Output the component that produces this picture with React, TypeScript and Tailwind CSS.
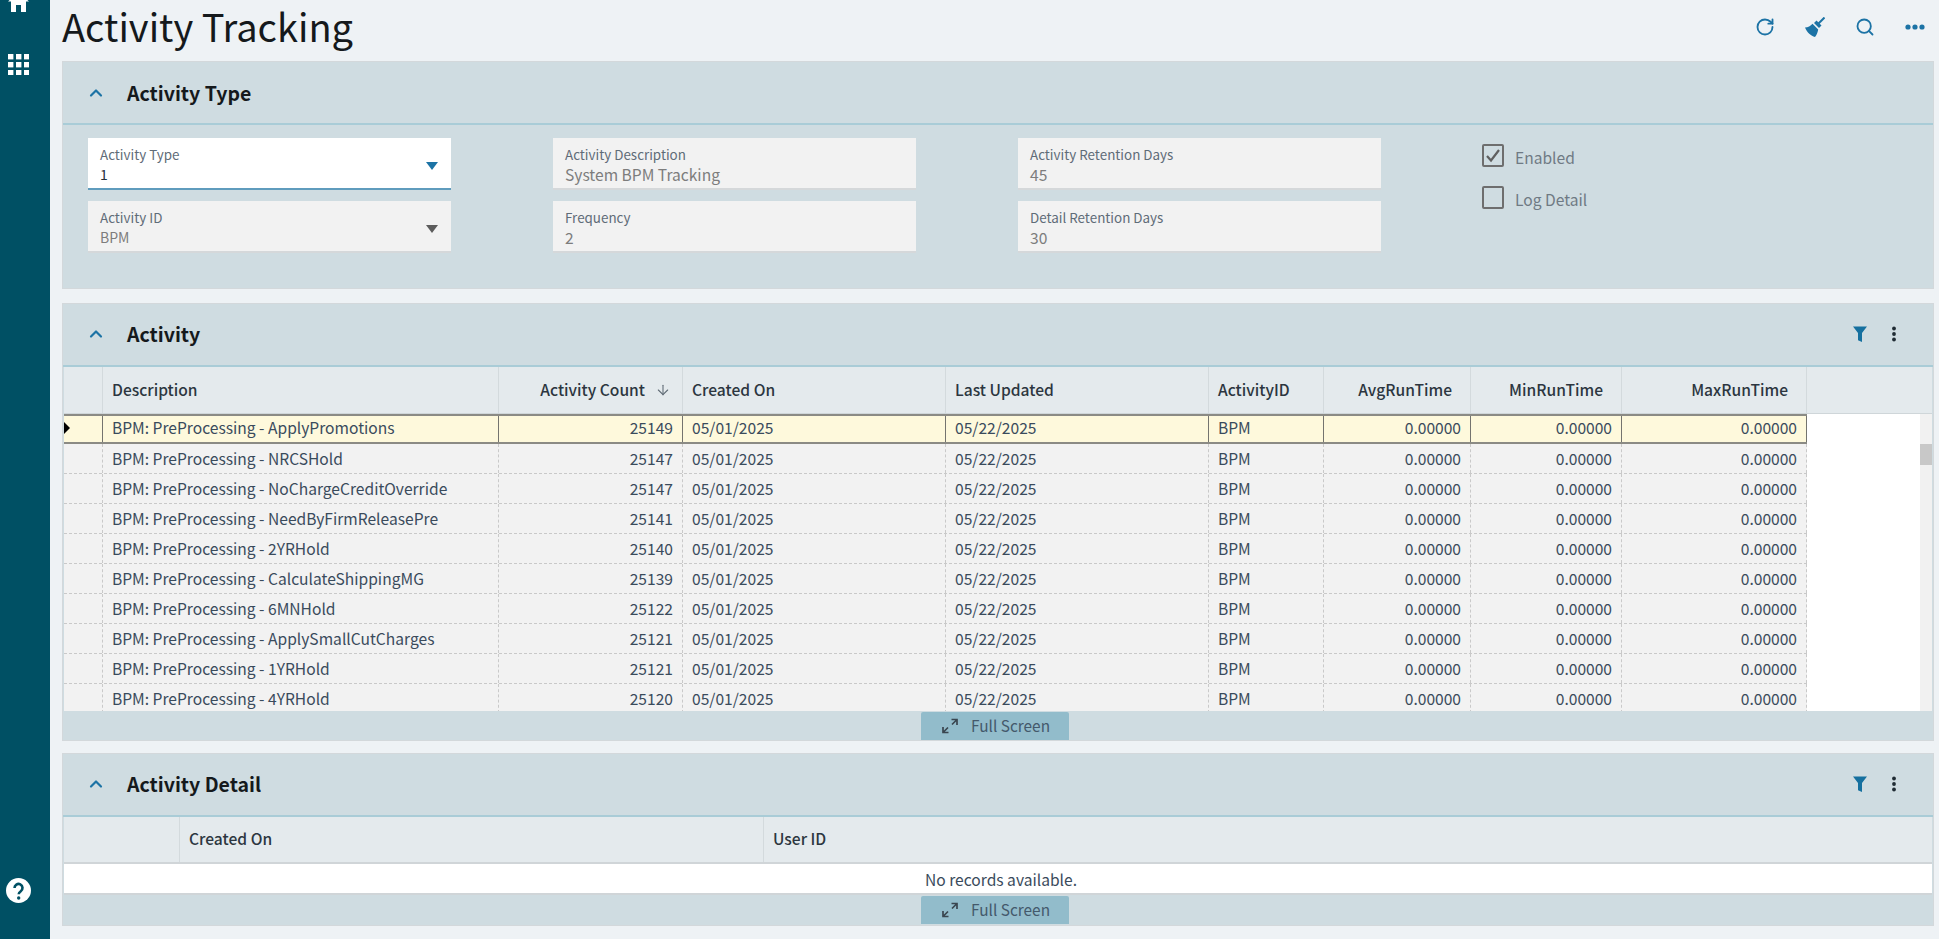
import React from "react";
import { RotateCw, Search, ChevronUp, ArrowDown } from "lucide-react";

const rows: [string, string][] = [
  ["ApplyPromotions", "25149"],
  ["NRCSHold", "25147"],
  ["NoChargeCreditOverride", "25147"],
  ["NeedByFirmReleasePre", "25141"],
  ["2YRHold", "25140"],
  ["CalculateShippingMG", "25139"],
  ["6MNHold", "25122"],
  ["ApplySmallCutCharges", "25121"],
  ["1YRHold", "25121"],
  ["4YRHold", "25120"],
];

function Filter() {
  return (
    <svg width="14" height="16" viewBox="0 0 14 16" className="text-[#16709f]">
      <path d="M0 0.500h14L9 7v9l-4-1.800V7z" fill="currentColor" />
    </svg>
  );
}

function VDots() {
  return (
    <svg width="6" height="18" viewBox="0 0 6 18" className="text-[#1f2b33]">
      <circle cx="3" cy="3.5" r="1.9" fill="currentColor" />
      <circle cx="3" cy="9" r="1.9" fill="currentColor" />
      <circle cx="3" cy="14.5" r="1.9" fill="currentColor" />
    </svg>
  );
}

function PanelHeader({ title, tools }: { title: string; tools?: boolean }) {
  return (
    <div className={`flex h-[63px] shrink-0 items-center border-b-2 border-[#a9ccd7] pl-[25px] pr-[36px] ${tools ? "pb-[2px]" : ""}`}>
      <ChevronUp size={20} strokeWidth={2.6} className="-ml-[2px] text-[#1c73a5]" />
      <div className="ml-[21px] text-[19.5px] font-semibold leading-[26px] text-[#15191c]">{title}</div>
      {tools && (
        <div className="ml-auto flex items-center gap-[24px]">
          <Filter />
          <VDots />
        </div>
      )}
    </div>
  );
}

function Field({ label, value, active, dropdown, small }: { label: string; value: string; active?: boolean; dropdown?: boolean; small?: boolean }) {
  return (
    <div
      className={`relative h-[52px] border-b-2 px-3 pt-[7px] ${
        active ? "border-[#5f9cbd] bg-white" : "border-[#d5d8da] bg-[#f2f2f2]"
      }`}
    >
      <div className="text-[13.4px] leading-[18px] text-[#5f6c78]">{label}</div>
      <div
        className={`${small || active ? "text-[14px]" : "text-[15.6px]"} mt-px leading-[20px] ${
          active ? "text-[#26303a]" : "text-[#7d7d7d]"
        }`}
      >
        {value}
      </div>
      {dropdown && (
        <svg width="12" height="8" viewBox="0 0 12 8" className={`absolute right-[13px] top-[24px] ${active ? "text-[#1c73a5]" : "text-[#5c5c5c]"}`}>
          <path d="M0 0h12L6 8z" fill="currentColor" />
        </svg>
      )}
    </div>
  );
}

function Check({ label, checked }: { label: string; checked?: boolean }) {
  return (
    <div className="-ml-px flex h-[23px] items-center gap-[11px]">
      <div className="flex h-[23px] w-[22px] items-center justify-center rounded-[2px] border-2 border-[#6e6e6e]">
        {checked && (
          <svg width="16" height="15" viewBox="0 0 16 15" className="text-[#5f5f5f]">
            <path d="M2 8l4 4.5L14 2" fill="none" stroke="currentColor" strokeWidth="2.2" />
          </svg>
        )}
      </div>
      <span className="mt-[3px] text-[15.6px] leading-[20px] text-[#6f7a84]">{label}</span>
    </div>
  );
}

function FullScreen() {
  return (
    <div className="flex h-[29px] shrink-0 items-start justify-center pr-[6px] pt-px">
      <div className="flex h-[28px] w-[148px] items-center rounded-t-[2px] bg-[#92bccb] pl-[21px] text-[15.4px] text-[#44596b]">
        <svg width="16" height="16" viewBox="0 0 16 16" className="text-[#3a4650]">
          <path d="M9.5 1.5H15V7M15 1.5L10 6.5M1 9v5.5h5.5M1 14.5L6 9.5" fill="none" stroke="currentColor" strokeWidth="1.7" />
        </svg>
        <span className="-mt-[3px] ml-[13px] leading-[20px]">Full Screen</span>
      </div>
    </div>
  );
}

function HeadCell({ children, right, last }: { children?: React.ReactNode; right?: boolean; last?: boolean }) {
  return (
    <div
      className={`flex items-center pb-px pl-[9px] text-[15.6px] font-medium text-[#2c3640] ${right ? "justify-end pr-[18px]" : "pr-[9px]"} ${
        last ? "" : "border-r border-[#d3dadd]"
      }`}
    >
      {children}
    </div>
  );
}

function Row({ name, count, selected }: { name: string; count: string; selected?: boolean }) {
  const border = selected ? "border-r border-[#74746f]" : "border-r border-dashed border-[#c9c9c9]";
  const cell = `flex items-center px-[9px] ${selected ? "pb-[2px]" : ""} ${border}`;
  const num = `${cell} justify-end`;
  return (
    <div
      className={`grid h-[30px] shrink-0 grid-cols-[39px_396px_184px_263px_263px_115px_147px_151px_185px] text-[15.6px] text-[#3a4b5c] ${
        selected ? "border-y-2 border-[#8b8b85] bg-[#fef9dc]" : "border-b border-dashed border-[#c9c9c9] bg-[#f2f2f2]"
      }`}
    >
      <div className={`flex items-center ${selected ? "pb-[2px]" : ""} ${border}`}>
        {selected && (
          <svg width="6" height="12" viewBox="0 0 6 12" className="text-black">
            <path d="M0 0l6 6-6 6z" fill="currentColor" />
          </svg>
        )}
      </div>
      <div className={cell}>BPM: PreProcessing - {name}</div>
      <div className={num}>{count}</div>
      <div className={cell}>05/01/2025</div>
      <div className={cell}>05/22/2025</div>
      <div className={cell}>BPM</div>
      <div className={num}>0.00000</div>
      <div className={num}>0.00000</div>
      <div className={num}>0.00000</div>
    </div>
  );
}

export default function App() {
  return (
    <div className="flex h-[939px] w-[1939px] overflow-hidden bg-[#eef2f5] font-['Noto_Sans_CJK_SC','Noto_Sans',sans-serif]">
      <aside className="flex h-full w-[50px] shrink-0 flex-col bg-[#005064] pl-[8px] text-white">
        <svg width="21" height="20" viewBox="0 0 21 20" className="-mt-[8px]">
          <path d="M10.5 0L21 9.5h-3V20h-5v-7H8v7H3V9.5H0z" fill="currentColor" />
        </svg>
        <svg width="21" height="21" viewBox="0 0 21 21" className="mt-[42px]">
          {[0, 8, 16].map((y) =>
            [0, 8, 16].map((x) => <rect key={`${x}-${y}`} x={x} y={y} width="5.4" height="5.4" fill="currentColor" />)
          )}
        </svg>
        <svg width="25" height="25" viewBox="0 0 25 25" className="-ml-[2px] mb-[36px] mt-auto">
          <circle cx="12.5" cy="12.5" r="12.5" fill="currentColor" />
          <path d="M8.5 10a4 4 0 1 1 6.3 3.2c-1.4 1-2.1 1.6-2.1 3" fill="none" stroke="#005064" strokeWidth="2.6" />
          <circle cx="12.7" cy="20" r="1.7" fill="#005064" />
        </svg>
      </aside>

      <main className="flex min-w-0 flex-1 flex-col pl-[12px] pr-[5px]">
        <div className="flex h-[61px] shrink-0 items-center">
          <h1 className="-mt-[10px] text-[38px] font-normal leading-[50px] text-[#15191c]">Activity Tracking</h1>
          <div className="-mt-[7px] ml-auto mr-[9px] flex items-center gap-[30px] text-[#1c73a5]">
            <RotateCw size={20} strokeWidth={2.2} />
            <svg width="20" height="20" viewBox="0 0 20 20">
              <path d="M19.5 0.500l-6 6" stroke="currentColor" strokeWidth="2" fill="none" />
              <path d="M11.500 3.500l5 5-2.500 2.500-5-5z" fill="currentColor" />
              <path d="M7.500 6.800l5.700 5.700c-.6 3-1.600 5.500-3.200 7.500C6 19 2 15.500 0 10.500 3 10.500 5.500 9 7.500 6.800z" fill="currentColor" />
            </svg>
            <Search size={20} strokeWidth={2.2} />
            <svg width="20" height="6" viewBox="0 0 20 6">
              <circle cx="3" cy="3" r="2.6" fill="currentColor" />
              <circle cx="10" cy="3" r="2.6" fill="currentColor" />
              <circle cx="17" cy="3" r="2.6" fill="currentColor" />
            </svg>
          </div>
        </div>

        <section className="flex h-[228px] shrink-0 flex-col border border-[#d3d8db] bg-[#cfdce1]">
          <PanelHeader title="Activity Type" />
          <div className="grid grid-cols-[363px_363px_363px_auto] gap-x-[102px] gap-y-[11px] pl-[25px] pt-[13px]">
            <Field label="Activity Type" value="1" active dropdown />
            <Field label="Activity Description" value="System BPM Tracking" />
            <Field label="Activity Retention Days" value="45" />
            <div className="row-span-2 flex flex-col gap-[19px] pt-[6px]">
              <Check label="Enabled" checked />
              <Check label="Log Detail" />
            </div>
            <Field label="Activity ID" value="BPM" dropdown small />
            <Field label="Frequency" value="2" />
            <Field label="Detail Retention Days" value="30" />
          </div>
        </section>

        <section className="mt-[14px] flex h-[438px] shrink-0 flex-col border border-[#d3d8db] bg-[#cfdce1]">
          <PanelHeader title="Activity" tools />
          <div className="mx-px">
            <div className="grid h-[47px] grid-cols-[39px_396px_184px_263px_263px_115px_147px_151px_185px_1fr] border-b border-[#cfd6d9] bg-[#e4eaed]">
              <HeadCell />
              <HeadCell>Description</HeadCell>
              <HeadCell right>
                Activity Count
                <ArrowDown size={16} strokeWidth={1.6} className="-mr-[7px] ml-[10px] text-[#5f6a74]" />
              </HeadCell>
              <HeadCell>Created On</HeadCell>
              <HeadCell>Last Updated</HeadCell>
              <HeadCell>ActivityID</HeadCell>
              <HeadCell right>AvgRunTime</HeadCell>
              <HeadCell right>MinRunTime</HeadCell>
              <HeadCell right>MaxRunTime</HeadCell>
              <HeadCell last />
            </div>
            <div className="flex h-[297px] overflow-hidden bg-white">
              <div className="flex w-[1743px] shrink-0 flex-col">
                {rows.map(([n, c], i) => (
                  <Row key={n} name={n} count={c} selected={i === 0} />
                ))}
              </div>
              <div className="flex-1" />
              <div className="w-[12px] shrink-0 bg-[#f1f1f1] pt-[30px]">
                <div className="h-[21px] bg-[#c8c8c8]" />
              </div>
            </div>
          </div>
          <FullScreen />
        </section>

        <section className="mt-[12px] flex h-[173px] shrink-0 flex-col border border-[#d3d8db] bg-[#cfdce1]">
          <PanelHeader title="Activity Detail" tools />
          <div className="mx-px">
            <div className="grid h-[47px] grid-cols-[116px_584px_1fr] border-b-2 border-[#d0d5d8] bg-[#e4eaed]">
              <HeadCell />
              <HeadCell>Created On</HeadCell>
              <HeadCell last>User ID</HeadCell>
            </div>
            <div className="flex h-[31px] items-center justify-center border-b-2 border-[#d0d5d8] bg-white pl-[6px] pt-[3px] text-[15.6px] text-[#3a4b5c]">
              No records available.
            </div>
          </div>
          <FullScreen />
        </section>
      </main>
    </div>
  );
}
